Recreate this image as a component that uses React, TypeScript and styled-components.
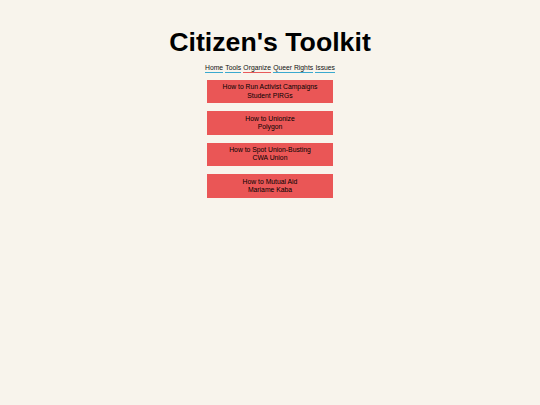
import React from 'react';
import styled, { createGlobalStyle } from 'styled-components';

const GlobalStyle = createGlobalStyle`
  body {
    margin: 0;
    background: #f8f4ec;
    font-family: "Liberation Sans", Arial, sans-serif;
    color: #000;
  }
`;

const Page = styled.div`
  display: flex;
  flex-direction: column;
  align-items: center;
  padding-top: 27px;
`;

const Title = styled.h1`
  font-size: 26.7px;
  font-weight: bold;
  margin: 0;
  line-height: 31px;
`;

const Nav = styled.nav`
  display: flex;
  gap: 2.2px;
  margin-top: 6px;
  font-size: 6.8px;
`;

const NavLink = styled.a<{ $active?: boolean }>`
  color: #111;
  text-decoration: none;
  line-height: 8px;
  border-bottom: 1.6px solid ${(p) => (p.$active ? '#e85a5a' : '#3aa9cf')};
`;

const List = styled.div`
  display: flex;
  flex-direction: column;
  gap: 8px;
  margin-top: 7px;
`;

const Card = styled.div`
  width: 126px;
  height: 23.4px;
  background: #ea5656;
  display: flex;
  flex-direction: column;
  justify-content: center;
  align-items: center;
  font-size: 6.8px;
  line-height: 8.2px;
  text-align: center;
`;

const links = [
  { label: 'Home' },
  { label: 'Tools' },
  { label: 'Organize', active: true },
  { label: 'Queer Rights' },
  { label: 'Issues' },
];

const guides = [
  { title: 'How to Run Activist Campaigns', by: 'Student PIRGs' },
  { title: 'How to Unionize', by: 'Polygon' },
  { title: 'How to Spot Union-Busting', by: 'CWA Union' },
  { title: 'How to Mutual Aid', by: 'Mariame Kaba' },
];

const App = () => {
  return (
    <Page>
      <GlobalStyle />
      <Title>Citizen's Toolkit</Title>
      <Nav>
        {links.map((l) => (
          <NavLink key={l.label} href="#" $active={l.active}>
            {l.label}
          </NavLink>
        ))}
      </Nav>
      <List>
        {guides.map((g) => (
          <Card key={g.title}>
            <span>{g.title}</span>
            <span>{g.by}</span>
          </Card>
        ))}
      </List>
    </Page>
  );
};

export default App;
